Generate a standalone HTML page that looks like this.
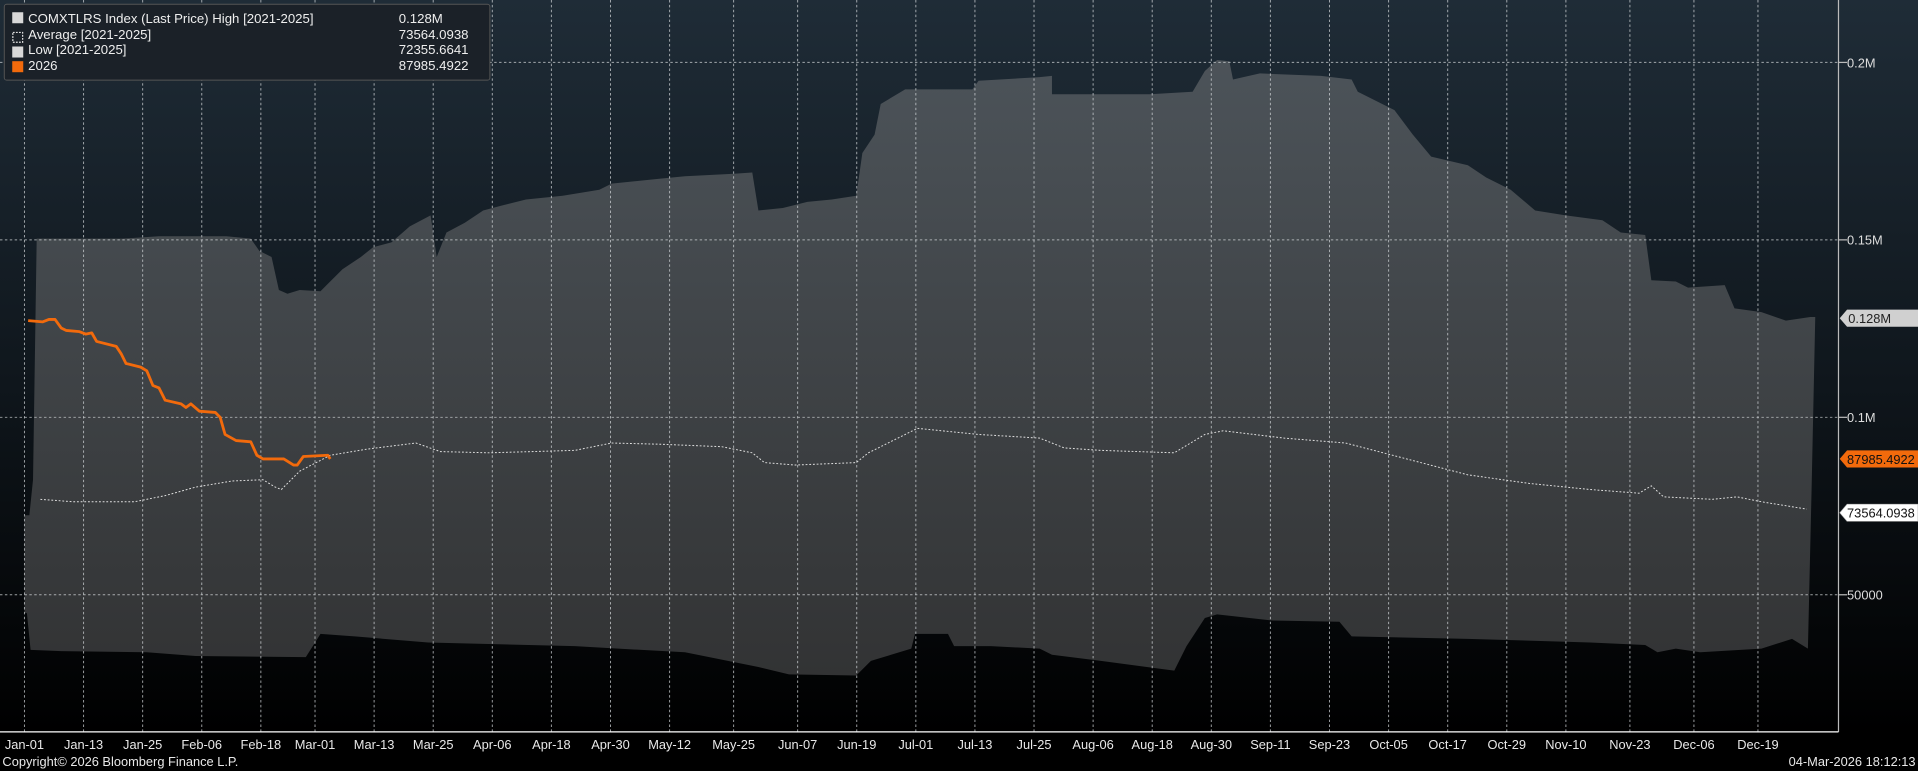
<!DOCTYPE html>
<html><head><meta charset="utf-8"><style>
html,body{margin:0;padding:0;background:#000;width:1918px;height:771px;overflow:hidden}
svg{display:block}
text{font-family:"Liberation Sans",sans-serif}
</style></head><body>
<svg width="1918" height="771" viewBox="0 0 1568 630" preserveAspectRatio="none">
<defs>
<linearGradient id="bg" x1="0" y1="0" x2="0" y2="1">
<stop offset="0" stop-color="#1f2c37"/><stop offset="0.5" stop-color="#0f161c"/><stop offset="0.95" stop-color="#000"/></linearGradient>
<linearGradient id="ar" x1="0" y1="0" x2="0" y2="1">
<stop offset="0" stop-color="#4c5359"/><stop offset="1" stop-color="#323334"/></linearGradient>
</defs>
<rect width="1568" height="630" fill="url(#bg)"/>
<polygon fill="url(#ar)" points="20,421 24,421 27,392 30,195 100,195 130,193 185,193 205,195 212,205 222,210 228,237 235,240 245,237 262,238 268,232 280,220 295,210 305,202 320,198 335,185 352,176 357,210 365,190 380,182 395,172 410,168 430,163 460,160 490,155 500,150 540,146 560,144 600,142 615,141 620,172 640,170 660,165 680,163 700,160 705,125 715,110 720,85 740,73 760,73 795,73 800,66 850,63 860,62 860,77 880,77 940,77 975,75 985,58 995,49 1005,50 1008,65 1030,60 1080,62 1105,65 1110,75 1140,90 1155,110 1170,128 1200,135 1215,145 1235,155 1255,172 1280,176 1310,180 1325,190 1345,192 1350,229 1370,230 1380,235 1410,233 1418,252 1440,255 1460,262 1480,259 1484,259 1481,400 1478,530 1465,522 1440,530 1390,533 1370,530 1355,533 1345,527 1300,525 1200,522 1105,520 1095,508 1040,507 995,502 985,505 970,528 960,548 900,540 860,535 850,530 810,528 780,528 775,518 748,518 745,530 712,540 700,552 645,551 620,545 560,533 470,528 350,525 290,520 262,518 250,537 160,536 120,533 50,532 25,531 22,501 20,501"/>
<g stroke="#cfd3d6" stroke-width="0.8" stroke-dasharray="2,2" fill="none" opacity="0.75">
<line x1="0" y1="51" x2="1503" y2="51"/><line x1="0" y1="196" x2="1503" y2="196"/>
<line x1="0" y1="341" x2="1503" y2="341"/><line x1="0" y1="486" x2="1503" y2="486"/>
</g>
<g stroke="#cfd3d6" stroke-width="0.8" stroke-dasharray="2,2" opacity="0.75" id="vg"></g>
<polyline fill="none" stroke="#e0e0e0" stroke-width="0.8" stroke-dasharray="1.5,1.5" points="33,408 60,410 110,410 135,405 160,398 190,393 215,392 225,398 230,400 245,385 270,372 300,367 340,362 360,369 400,370 470,368 500,362 540,363 590,365 615,370 625,378 650,380 700,378 710,370 730,360 750,350 800,355 850,358 870,366 900,368 960,370 985,355 1000,352 1050,358 1100,362 1150,375 1200,388 1250,395 1300,400 1340,403 1350,397 1360,406 1400,408 1420,406 1440,410 1477,416"/>
<polyline fill="none" stroke="#f26a0c" stroke-width="2.3" stroke-linejoin="round" points="23,262 35,263 40,261 45,261 50,268 54,270 65,271 70,273 75,272 79,279 95,283 99,289 103,297 115,300 120,303 125,315 130,317 135,327 148,330 152,333 156,330 163,336 176,337 180,341 184,355 193,360 205,361 210,372 215,375 232,375 240,380 243,380 248,373 268,372 270,375"/>
<line x1="1503" y1="0" x2="1503" y2="598" stroke="#bbb" stroke-width="1"/>
<line x1="0" y1="598" x2="1503" y2="598" stroke="#fff" stroke-width="1"/>
<g fill="#ddd" font-size="10.5">
<text x="1510" y="55">0.2M</text><text x="1510" y="200">0.15M</text>
<text x="1510" y="345">0.1M</text><text x="1510" y="490">50000</text>
</g>
<g stroke="#bbb"><line x1="1503" y1="51" x2="1510" y2="51"/><line x1="1503" y1="196" x2="1510" y2="196"/><line x1="1503" y1="341" x2="1510" y2="341"/><line x1="1503" y1="486" x2="1510" y2="486"/></g>
<polygon points="1504,260 1510,253 1568,253 1568,267 1510,267" fill="#d0d0d0"/>
<text x="1511" y="264" font-size="10.5" fill="#222">0.128M</text>
<polygon points="1504,375 1510,368 1568,368 1568,382 1510,382" fill="#f26a0c"/>
<text x="1510" y="379" font-size="10.5" fill="#111">87985.4922</text>
<polygon points="1504,419 1510,412 1568,412 1568,426 1510,426" fill="#fff" stroke="#aaa" stroke-width="0.5"/>
<text x="1510" y="423" font-size="10.5" fill="#111">73564.0938</text>
<g fill="#e8e8e8" font-size="10.5" id="xl"></g>
<text x="2" y="626" font-size="10.5" fill="#e8e8e8">Copyright© 2026 Bloomberg Finance L.P.</text>
<text x="1566" y="626" font-size="10.5" fill="#e8e8e8" text-anchor="end">04-Mar-2026 18:12:13</text>
<rect x="3.5" y="3.5" width="397" height="62" rx="2" fill="#1b2128" stroke="#555" stroke-width="0.8"/>
<g font-size="10.8" fill="#eee">
<rect x="10" y="10" width="9" height="9" fill="#d8d8d8"/>
<rect x="10.5" y="26.5" width="8" height="8" fill="none" stroke="#ddd" stroke-dasharray="1.5,1"/>
<rect x="10" y="38" width="9" height="9" fill="#d8d8d8"/>
<rect x="10" y="50" width="9" height="9" fill="#f26a0c"/>
<text x="23" y="19">COMXTLRS Index (Last Price) High [2021-2025]</text><text x="326" y="19">0.128M</text>
<text x="23" y="32">Average  [2021-2025]</text><text x="326" y="32">73564.0938</text>
<text x="23" y="44">Low  [2021-2025]</text><text x="326" y="44">72355.6641</text>
<text x="23" y="57">2026</text><text x="326" y="57">87985.4922</text>
</g>
</svg>
<script>
var d=[["Jan-01",0],["Jan-13",12],["Jan-25",24],["Feb-06",36],["Feb-18",48],["Mar-01",59],["Mar-13",71],["Mar-25",83],["Apr-06",95],["Apr-18",107],["Apr-30",119],["May-12",131],["May-25",144],["Jun-07",157],["Jun-19",169],["Jul-01",181],["Jul-13",193],["Jul-25",205],["Aug-06",217],["Aug-18",229],["Aug-30",241],["Sep-11",253],["Sep-23",265],["Oct-05",277],["Oct-17",289],["Oct-29",301],["Nov-10",313],["Nov-23",326],["Dec-06",339],["Dec-19",352]];
var ns="http://www.w3.org/2000/svg",vg=document.getElementById("vg"),xl=document.getElementById("xl");
d.forEach(function(a){var x=20+a[1]*4.026;var l=document.createElementNS(ns,"line");l.setAttribute("x1",x);l.setAttribute("x2",x);l.setAttribute("y1",0);l.setAttribute("y2",598);vg.appendChild(l);
var t=document.createElementNS(ns,"text");t.setAttribute("x",x);t.setAttribute("y",612);t.setAttribute("text-anchor","middle");t.textContent=a[0];xl.appendChild(t);});
</script>
</body></html>
